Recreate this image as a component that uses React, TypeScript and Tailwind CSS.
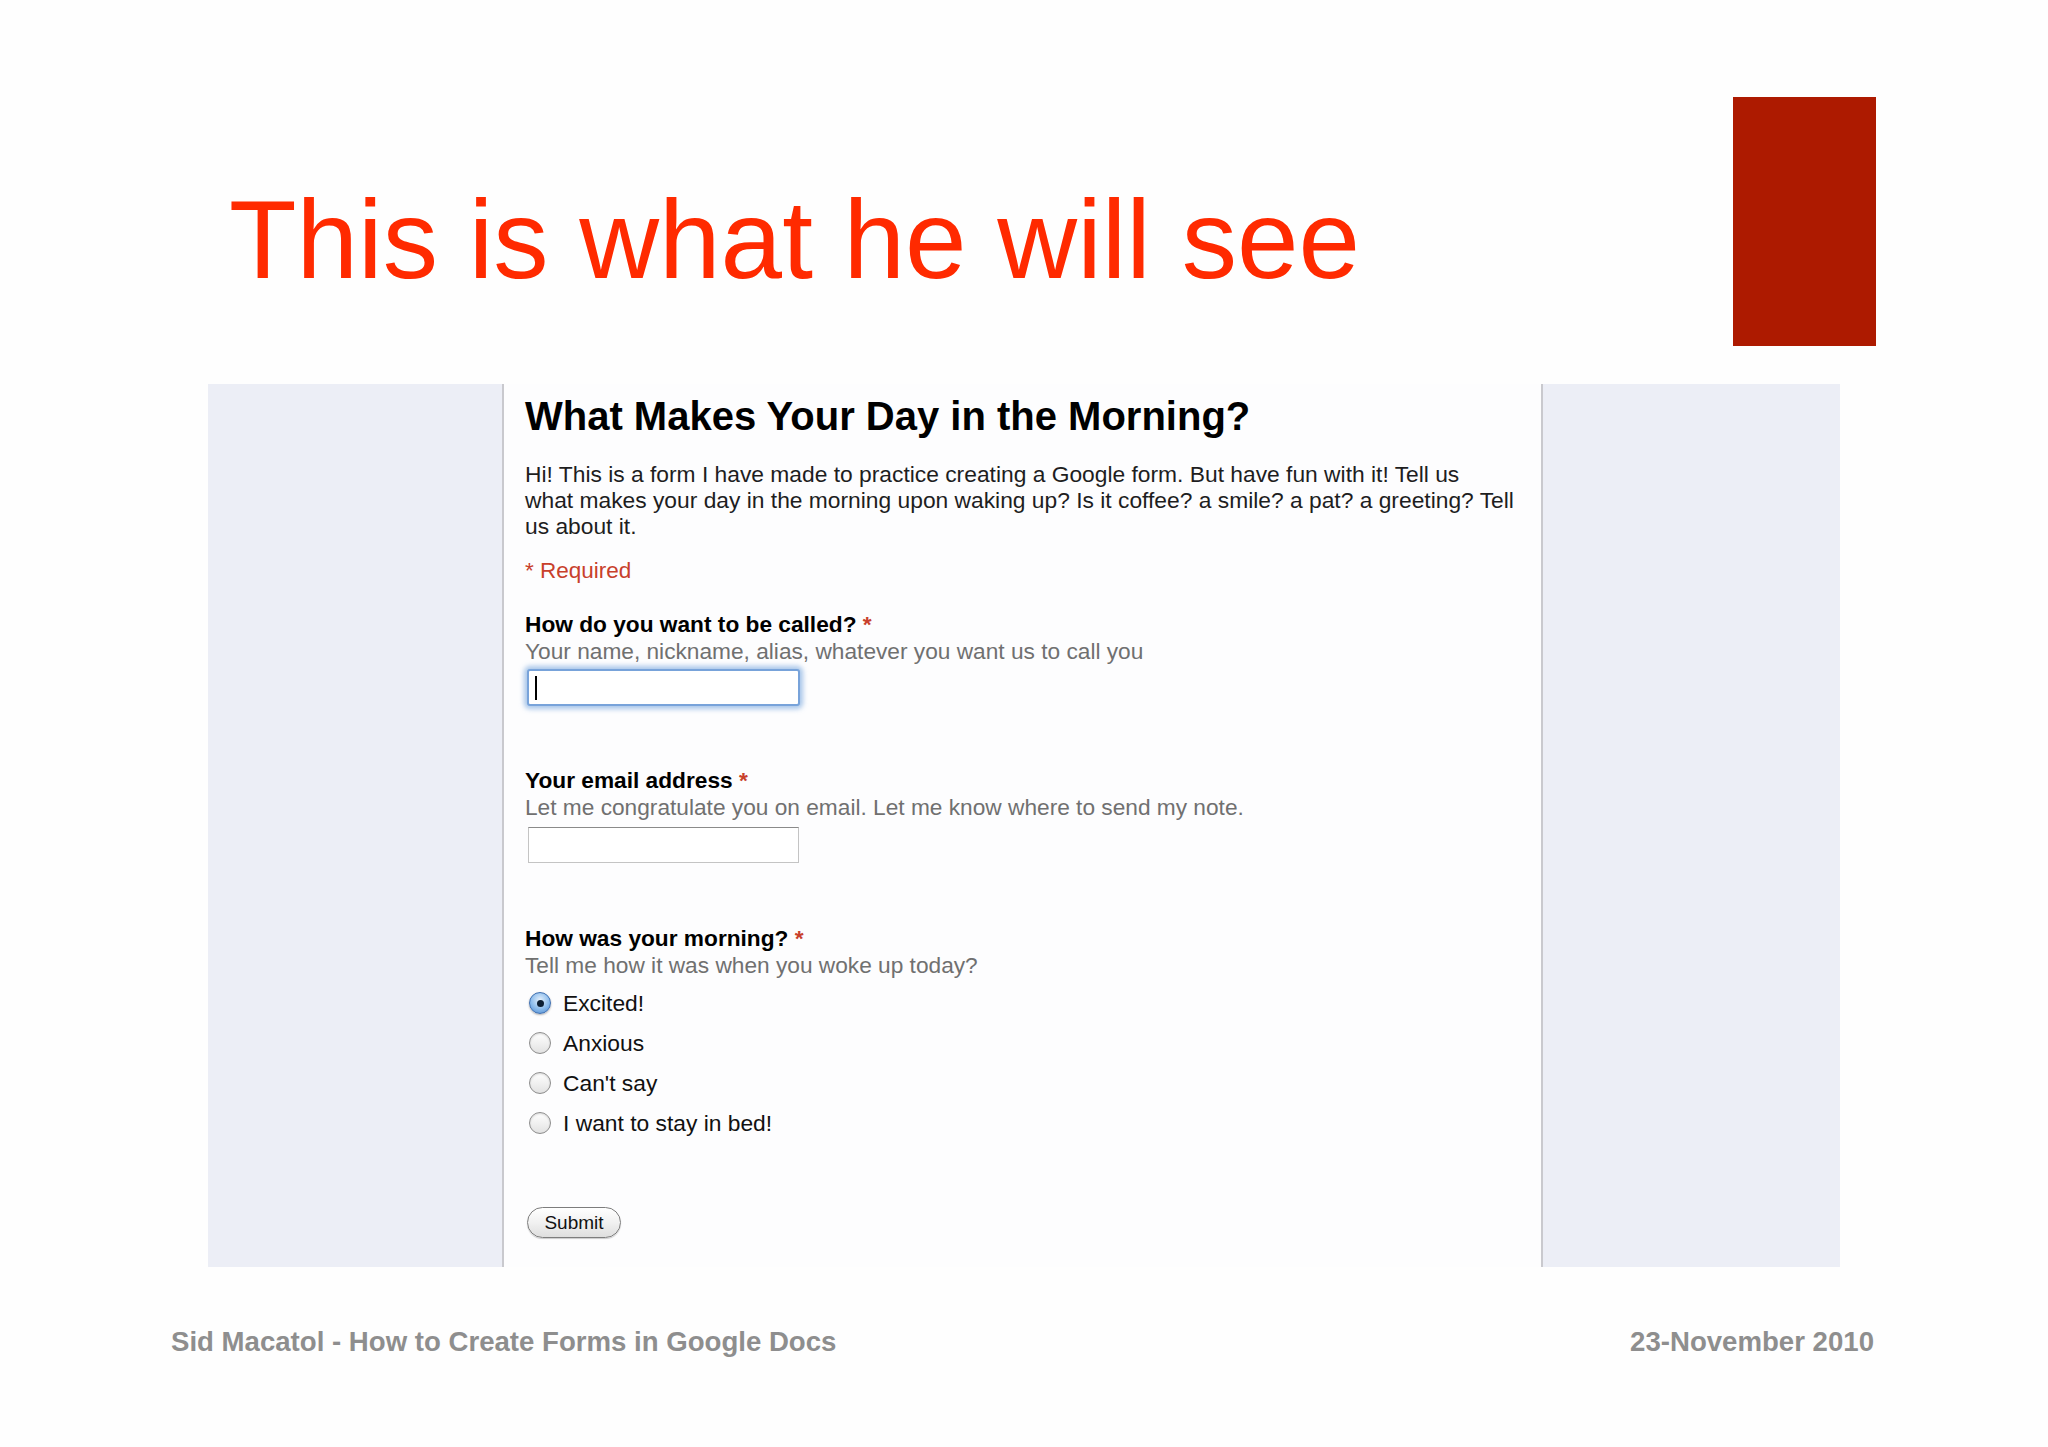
import React from 'react';

const options = ['Excited!', 'Anxious', "Can't say", 'I want to stay in bed!'];

const Star = () => <span className="text-[#c8402c]"> *</span>;

const Radio: React.FC<{ checked?: boolean }> = ({ checked }) =>
  checked ? (
    <span className="flex h-[22px] w-[22px] items-center justify-center rounded-full border border-[#3f6fb0] bg-[radial-gradient(circle_at_50%_35%,#e4f0fc_0%,#8cbcec_55%,#4a86cf_100%)] shadow-[0_1px_2px_rgba(0,0,0,0.3)]">
      <span className="h-[7px] w-[7px] rounded-full bg-[#0d1f33]" />
    </span>
  ) : (
    <span className="h-[22px] w-[22px] rounded-full border border-[#8d8d8d] bg-[linear-gradient(#ffffff,#e2e2e2)] shadow-[inset_0_1px_2px_rgba(0,0,0,0.15)]" />
  );

export default function App() {
  return (
    <div className="flex h-[1447px] w-[2048px] flex-col bg-[#fefefe] font-['Liberation_Sans',Arial,sans-serif]">
      {/* Slide header */}
      <div className="flex justify-between pl-[229px] pr-[172px] pt-[97px]">
        <h1 className="mt-[88px] text-[110.6px] leading-none text-[#ff2a00]">This is what he will see</h1>
        <div className="h-[249px] w-[143px] bg-[#ad1a00]" />
      </div>

      {/* Form screenshot */}
      <div className="ml-[208px] mt-[38px] flex h-[883px] w-[1632px]">
        <div className="w-[294px] bg-[#eceef6]" />
        <div className="w-[2px] bg-[#c9c9ce]" />
        <div className="flex w-[1037px] flex-col bg-[#fdfdfe] pl-[21px] pt-[12px]">
          <h2 className="text-[40px] font-bold leading-none text-black">What Makes Your Day in the Morning?</h2>
          <p className="mt-[25px] whitespace-nowrap text-[22.8px] leading-[26px] text-[#1e1e1e]">
            Hi! This is a form I have made to practice creating a Google form. But have fun with it! Tell us
            <br />
            what makes your day in the morning upon waking up? Is it coffee? a smile? a pat? a greeting? Tell
            <br />
            us about it.
          </p>
          <p className="mt-[19px] text-[22.5px] leading-[26px] text-[#c8402c]">* Required</p>

          <div className="mt-[27px] text-[22.7px] font-bold leading-[27px] text-black">
            How do you want to be called?<Star />
          </div>
          <div className="text-[22.7px] leading-[27px] text-[#707070]">Your name, nickname, alias, whatever you want us to call you</div>
          <div className="ml-[2px] mt-[4px] flex h-[37px] w-[273px] items-center rounded-[3px] border-2 border-[#78a3da] bg-white pl-[6px] shadow-[0_0_5px_3px_rgba(110,160,220,0.6)]">
            <span className="h-[24px] w-[2px] bg-black" />
          </div>

          <div className="mt-[61px] text-[22.7px] font-bold leading-[27px] text-black">
            Your email address<Star />
          </div>
          <div className="text-[22.7px] leading-[27px] text-[#707070]">Let me congratulate you on email. Let me know where to send my note.</div>
          <div className="ml-[3px] mt-[6px] h-[36px] w-[271px] border border-[#c4c4c4] border-t-[#8a8a8a] bg-white" />

          <div className="mt-[62px] text-[22.7px] font-bold leading-[27px] text-black">
            How was your morning?<Star />
          </div>
          <div className="text-[22.7px] leading-[27px] text-[#707070]">Tell me how it was when you woke up today?</div>
          <div className="mt-[4px] flex flex-col">
            {options.map((o, i) => (
              <label key={o} className="flex h-[40px] items-center gap-[12px] pl-[4px] text-[22.8px] leading-[26px] text-[#111]">
                <Radio checked={i === 0} />
                <span>{o}</span>
              </label>
            ))}
          </div>

          <button className="ml-[2px] mt-[64px] flex h-[31px] w-[94px] items-center justify-center rounded-full border border-[#7d7d7d] bg-[linear-gradient(#ffffff,#f1f1f1_50%,#dedede)] text-[19px] leading-none text-[#111] shadow-[0_1px_1px_rgba(0,0,0,0.2)]">
            Submit
          </button>
        </div>
        <div className="w-[2px] bg-[#c9c9ce]" />
        <div className="w-[297px] bg-[#eceef6]" />
      </div>

      {/* Slide footer */}
      <div className="mt-[60px] flex justify-between pl-[171px] pr-[174px] text-[27.6px] font-bold leading-[30px] text-[#8e8e8e]">
        <span>Sid Macatol - How to Create Forms in Google Docs</span>
        <span>23-November 2010</span>
      </div>
    </div>
  );
}
